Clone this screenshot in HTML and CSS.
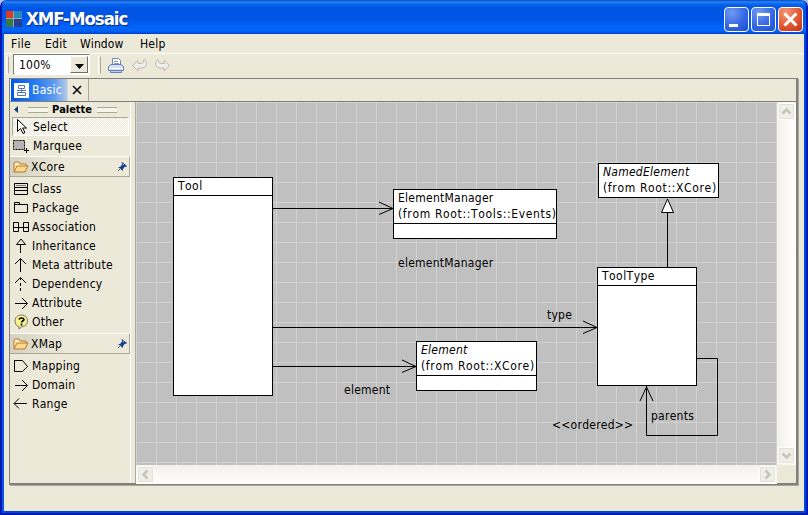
FILE: index.html
```html
<!DOCTYPE html>
<html lang="en">
<head>
<meta charset="utf-8">
<title>XMF-Mosaic</title>
<link rel="stylesheet" href="styles.css">
</head>
<body>
<div class="window">
  <header class="titlebar">
    <svg class="logo" width="16" height="16"><path fill="#d93a22" d="M0 0h8v8H0z"/><path fill="#248bb7" d="M8 0h8v8H8z"/><path fill="#347b45" d="M0 8h8v8H0z"/><path fill="#283e91" d="M8 8h8v8H8z"/><path d="M7.500 0v16M0 7.500h16" stroke="#8fa9bd"/></svg>
    <h1>XMF-Mosaic</h1>
    <div class="controls">
      <button class="ctl" aria-label="Minimize"><svg width="23" height="23"><path d="M4 16h9v3H4z" fill="#fff"/></svg></button>
      <button class="ctl" aria-label="Maximize"><svg width="23" height="23"><path d="M5 5h13v13H5zM6 8v9h11V8z" fill="#fff" fill-rule="evenodd"/></svg></button>
      <button class="ctl close" aria-label="Close"><svg width="23" height="23"><path d="M5.500 5.500l12 12M17.500 5.500l-12 12" stroke="#fff" stroke-width="3"/></svg></button>
    </div>
  </header>
  <nav class="menu"><span class="m1">File</span><span class="m2">Edit</span><span class="m3">Window</span><span class="m4">Help</span></nav>
  <div class="toolbar">
    <i class="grip"></i>
    <div class="combo"><span>100%</span><b><svg width="17" height="19"><path d="M4 7h9L8.500 12z"/></svg></b></div>
    <i class="grip second"></i>
    <svg class="print" width="16" height="17"><path d="M4.500 8V1.500h6l2 2V8" fill="#fff" stroke="#6d8bb8"/><path d="M6 4.500h4M6 6.500h5" stroke="#8c9ab0"/><path d="M3 7.500h10l2.500 2v4h-15v-4z" fill="#d5dff1" stroke="#6181b5"/><path d="M1 11.500h14" stroke="#fff"/><path d="M2.500 14v1.500h11V14" fill="#c1cee5" stroke="#6181b5"/></svg>
    <svg class="undo" width="16" height="15"><path d="M.5 7.500l5.500-5v3h3q3 0 3-4 3 1.500 2.500 5-.5 3.500-4.500 3.500H6v3z" fill="#efefeb" stroke="#bbb9b0"/></svg>
    <svg class="redo" width="16" height="15"><path d="M15.500 7.500l-5.500-5v3H7q-3 0-3-4Q1 3 1.500 6.500 2 10 6 10h4v3z" fill="#efefeb" stroke="#bbb9b0"/></svg>
  </div>
  <main class="editor">
    <div class="tabs"><div class="tab">
      <svg width="15" height="15"><path fill="#fff" d="M0 0h15v15H0z"/><path d="M4.500 2.500h6v3h-6zM3.500 9.500h8v3h-8zM7.500 5.500v4M3 7.500h9" fill="none" stroke="#5274b4"/></svg>
      <span>Basic</span><svg class="x" width="10" height="10"><path d="M1 1l8 8M9 1L1 9" stroke="#000" stroke-width="1.500"/></svg>
    </div></div>
    <div class="body">
      <aside class="palette">
        <div class="phead"><svg width="5" height="8"><path d="M4 0v7L0 3.500z" fill="#153e78"/></svg><i></i><strong>Palette</strong><i></i></div>
        <div class="row select"><svg width="16" height="18"><path d="M3.500 1.500v12l3-3 2.500 5 2-1-2.500-4.500h4z" fill="#fff" stroke="#000"/></svg><span>Select</span></div>
        <div class="row marquee"><svg width="17" height="17"><path d="M.5 3.500h11v9H.5z" fill="#b4b4b4" stroke="#000" stroke-dasharray="2 1"/><path d="M11 13.500h5M13.500 11v5" stroke="#000"/></svg><span>Marquee</span></div>
        <div class="group"><svg width="16" height="14"><path d="M1 12V3l1-1h4l1 2h6v2" fill="#ffeebc" stroke="#b87529"/><path d="M1 12l3-6h11l-3 6z" fill="#ffd98b" stroke="#b87529"/></svg><span>XCore</span><svg class="pin" width="9" height="10"><path d="M4 0l5 4-1 1-1-.5L5 7v2L0 5h2l2.500-3L3.500 1z" fill="#173f91"/><path d="M3 6L0 9" stroke="#666"/><path d="M5 2l1 1" stroke="#9db9ed"/></svg></div>
        <div class="items">
          <div class="row"><svg width="16" height="16"><path d="M1.500 2.500h13v11h-13zM1 6.500h14M1 9.500h14" fill="none" stroke="#000"/><path d="M3 4.500h10" stroke="#777"/></svg><span>Class</span></div>
          <div class="row"><svg width="16" height="16"><path d="M1.500 12.500v-10h5v2h8v8zM1 4.500h6" fill="none" stroke="#000"/></svg><span>Package</span></div>
          <div class="row"><svg width="17" height="16"><path d="M.5 3.500h5v9h-5zM10.500 3.500h5v9h-5zM0 8.500h16" fill="none" stroke="#000"/></svg><span>Association</span></div>
          <div class="row"><svg width="16" height="16"><path d="M3.500 6.500L8 1l4.500 5.500zM7.500 6.500V15" fill="none" stroke="#000"/></svg><span>Inheritance</span></div>
          <div class="row"><svg width="16" height="16"><path d="M2 7l5.500-5.500L13 7M7.500 2v13" fill="none" stroke="#000"/></svg><span>Meta attribute</span></div>
          <div class="row"><svg width="16" height="16"><path d="M2 7l5.500-5.500L13 7M7.500 2v2M7.500 7v3M7.500 12v3" fill="none" stroke="#000"/></svg><span>Dependency</span></div>
          <div class="row"><svg width="16" height="16"><path d="M2 8.500h12M9 3l5.500 5.500L9 14" fill="none" stroke="#000"/></svg><span>Attribute</span></div>
          <div class="row"><svg width="16" height="16"><path d="M8.500 1C4 1 2 4 2 7s1.500 5 4 5.500V15l3-2.500c3.500 0 5.500-2.500 5.500-5.500s-2-6-6-6z" fill="#faf58a" stroke="#77766a"/><path d="M6 5.500q.5-1.500 2.500-1.500T11 5.500c0 1.500-2.500 1.500-2.500 3M8.500 9.500v2" fill="none" stroke="#000" stroke-width="1.600"/></svg><span>Other</span></div>
        </div>
        <div class="group"><svg width="16" height="14"><path d="M1 12V3l1-1h4l1 2h6v2" fill="#ffeebc" stroke="#b87529"/><path d="M1 12l3-6h11l-3 6z" fill="#ffd98b" stroke="#b87529"/></svg><span>XMap</span><svg class="pin" width="9" height="10"><path d="M4 0l5 4-1 1-1-.5L5 7v2L0 5h2l2.500-3L3.500 1z" fill="#173f91"/><path d="M3 6L0 9" stroke="#666"/><path d="M5 2l1 1" stroke="#9db9ed"/></svg></div>
        <div class="items">
          <div class="row"><svg width="16" height="16"><path d="M1.500 2.500h8l5 6-5 5h-8z" fill="none" stroke="#000"/></svg><span>Mapping</span></div>
          <div class="row"><svg width="16" height="16"><path d="M2 8.500h12M9 3l5.500 5.500L9 14" fill="none" stroke="#000"/></svg><span>Domain</span></div>
          <div class="row"><svg width="16" height="16"><path d="M14 7.500H1M6 2.500l-5 5 5 5" fill="none" stroke="#000"/></svg><span>Range</span></div>
        </div>
      </aside>
      <div class="splitter"></div>
      <section class="view">
        <div class="canvas">
          <svg class="links" width="641" height="363" fill="none" stroke="#000">
            <path d="M137 106.500h120M243 100l14 6.500-14 6M137 225.500h324M447 219l14 6.500-14 6M137 264.500h143M266 258l14 6.500-14 6M531.500 110v55M561 256.500h20.500v77h-71V284M504 299l6.500-14 6.500 14"/><path d="M531.500 97l6 13.500h-12z" fill="#fff"/>
          </svg>
          <div class="node tool"><p>Tool</p></div>
          <div class="node manager"><p>ElementManager<br><span class="origin">(from Root::Tools::Events)</span></p></div>
          <div class="node named"><p><em>NamedElement</em><br><span class="origin">(from Root::XCore)</span></p></div>
          <div class="node type"><p>ToolType</p></div>
          <div class="node element"><p><em>Element</em><br><span class="origin">(from Root::XCore)</span></p></div>
          <span class="label l1">elementManager</span><span class="label l2">type</span><span class="label l3">element</span><span class="label l4">&lt;&lt;ordered&gt;&gt;</span><span class="label l5">parents</span>
        </div>
        <div class="vbar"><b><svg width="15" height="15"><path d="M3.500 9.500l4-4 4 4" fill="none" stroke="#c5c4b9" stroke-width="2.500"/></svg></b><b><svg width="15" height="15"><path d="M3.500 5.500l4 4 4-4" fill="none" stroke="#c5c4b9" stroke-width="2.500"/></svg></b></div>
        <div class="hbar"><b><svg width="15" height="15"><path d="M9.500 3.500l-4 4 4 4" fill="none" stroke="#c5c4b9" stroke-width="2.500"/></svg></b><b><svg width="15" height="15"><path d="M5.500 3.500l4 4-4 4" fill="none" stroke="#c5c4b9" stroke-width="2.500"/></svg></b></div>
      </section>
    </div>
  </main>
</div>
</body>
</html>
```
FILE: styles.css
```css
* { box-sizing: border-box; }
body { margin: 0; overflow: hidden; background: #a7bfe9; color: #000; font: 12px/16px "DejaVu Sans Condensed", "DejaVu Sans", sans-serif; font-stretch: condensed; font-kerning: none; letter-spacing: .25px; }
svg { display: block; flex: none; }
p, h1 { margin: 0; }
span { white-space: nowrap; }
.window { width: 808px; height: 515px; display: flex; flex-direction: column; background: #ece9d8; border: 2px solid #0019b0; border-top: 0; padding: 0 2px 2px; border-radius: 7px 7px 0 0; box-shadow: inset 2px 0 #0855ee, inset -2px -2px #0046e6; overflow: hidden; }
.titlebar { height: 34px; margin: 0 -4px; padding: 2px 6px 0; display: flex; align-items: center; flex: none; background: linear-gradient(#0847c5 0, #2b83f8 2px, #0867ed 4px, #0055e2 8px, #0055e5 18px, #0264fc 28px, #0263f4 31px, #003fcd 34px); color: #fff; }
.logo { margin-top: 1px; }
h1 { margin: 2px 0 0 4px; flex: 1; font: bold 18.500px/24px "DejaVu Sans Condensed", "DejaVu Sans", sans-serif; font-stretch: condensed; letter-spacing: -1.050px; text-shadow: 1px 1px #0b2c77; }
.controls { display: flex; gap: 2px; margin: 2px -1px 0 0; flex: none; }
.ctl { width: 25px; height: 25px; padding: 0; border: 1px solid #fff; border-radius: 4px; background: radial-gradient(circle at 30% 20%, #729bf1, #3567e4 55%, #1951ce); }
.close { background: radial-gradient(circle at 30% 20%, #f39876, #e25633 55%, #be3014); }
.menu { display: flex; height: 20px; flex: none; padding-left: 7px; border-bottom: 1px solid #fff; line-height: 20px; }
.m1 { width: 34px; }
.m2 { width: 35px; }
.m3 { width: 60px; letter-spacing: .1px; }
.toolbar { display: flex; height: 24px; flex: none; align-items: flex-start; padding-left: 2px; }
.grip { width: 3px; height: 18px; margin: 2px 4px 0 0; border: 1px solid #fff; border-right-color: #aca899; }
.combo { width: 77px; height: 21px; border: 1px solid #7e7b70; border-right-color: #fff; border-bottom-color: #fff; background: #fff; display: flex; justify-content: space-between; padding-left: 5px; line-height: 20px; }
.combo b { width: 18px; margin: 1px; background: #ece9d8; border: 1px solid #fff; border-right-color: #716f64; border-bottom-color: #716f64; }
.second { margin-left: 8px; margin-right: 7px; }
.print { margin-top: 3px; }
.undo { margin: 4px 0 0 8px; }
.redo { margin: 4px 0 0 6px; }
.editor { width: 789px; height: 407px; margin-left: 5px; display: flex; flex-direction: column; border: 1px solid #808080; border-right: 2px solid #808080; border-bottom: 2px solid #808080; box-shadow: 1px 1px #aca899; flex: none; }
.tabs { height: 23px; border-bottom: 1px solid #808080; flex: none; }
.tab { height: 22px; width: 79px; display: flex; align-items: center; padding-left: 3px; border-right: 1px solid #aca899; color: #fff; border-left: 1px solid #fff; background: linear-gradient(90deg, #0058eb 0, #2277f2 22px, #5d9af0 43px, #b3c9e9 56px, #ece9d8 57px); }
.tab span { margin: 0 0 0 3px; width: 40px; }
.body { display: flex; flex: 1; min-height: 0; }
.palette { width: 120px; flex: none; }
.phead { height: 15px; display: flex; align-items: center; padding-left: 4px; }
.phead i { width: 20px; height: 6px; border: solid #aca899; border-width: 1px 0; background: #f6f4ea; margin-left: 9px; flex: none; }
.phead strong { margin-left: 4px; font-size: 11px; line-height: 14px; letter-spacing: -.05px; }
.phead strong + i { margin-left: 5px; }
.row { display: flex; align-items: center; height: 19px; padding-left: 3px; }
.row svg { width: 17px; }
.row span { margin-left: 2px; }
.select { height: 19px; margin: 0 1px 0 2px; padding-left: 1px; border: 1px solid #aca899; border-right-color: #fff; border-bottom-color: #fff; background: repeating-conic-gradient(#fff 0 25%, #ece9d8 0 50%) 0 0 / 2px 2px; }
.marquee span { margin-left: 3px; }
.marquee { height: 20px; padding-bottom: 1px; }
.group { height: 21px; display: flex; align-items: center; padding-left: 3px; border: 1px solid #fff; border-width: 1px 1px 1px 0; border-bottom-color: #aca899; border-right-color: #aca899; background: linear-gradient(90deg, #d5d1c2, #ece9d8 45%); }
.group span { margin-left: 2px; flex: 1; }
.pin { margin-right: 2px; }
.items { padding-top: 2px; padding-bottom: 2px; }
.splitter { width: 6px; flex: none; border-left: 1px solid #fff; border-right: 1px solid #aca899; }
.view { display: grid; grid-template: 363px 19px / 641px 19px; }
.canvas { position: relative; background: linear-gradient(90deg, #d2d2d2 1px, transparent 1px) 0 0 / 20px 20px, linear-gradient(#d2d2d2 1px, transparent 1px) 0 0 / 20px 20px, #c0c0c0; }
.links { position: absolute; left: 0; top: 0; }
.node { position: absolute; border: 1px solid #000; background: #fff; }
.node p { padding: 0 4px; height: 34px; border-bottom: 1px solid #000; white-space: nowrap; }
.origin { letter-spacing: .65px; }
.tool { left: 37px; top: 75px; width: 100px; height: 219px; }
.manager { left: 257px; top: 87px; width: 164px; height: 50px; }
.named { left: 462px; top: 61px; width: 121px; height: 35px; }
.type { left: 461px; top: 165px; width: 100px; height: 119px; }
.element { left: 280px; top: 239px; width: 121px; height: 50px; }
.tool p, .type p { height: 18px; letter-spacing: .45px; }
.named p { border: 0; }
.label { position: absolute; }
.l1 { left: 262px; top: 153px; }
.l2 { left: 411px; top: 205px; }
.l3 { left: 208px; top: 280px; }
.l4 { left: 416px; top: 315px; }
.l5 { left: 515px; top: 306px; }
.vbar, .hbar { display: flex; justify-content: space-between; padding: 1px; }
.vbar { flex-direction: column; background: linear-gradient(90deg, #f3f1ec, #fefefb); }
.hbar { background: linear-gradient(#f3f1ec, #fefefb); }
.vbar b, .hbar b { width: 17px; height: 17px; border: 1px solid #fff; outline: 1px solid #e3e1d5; outline-offset: -2px; border-radius: 2px; background: #f0efe7; }
```
